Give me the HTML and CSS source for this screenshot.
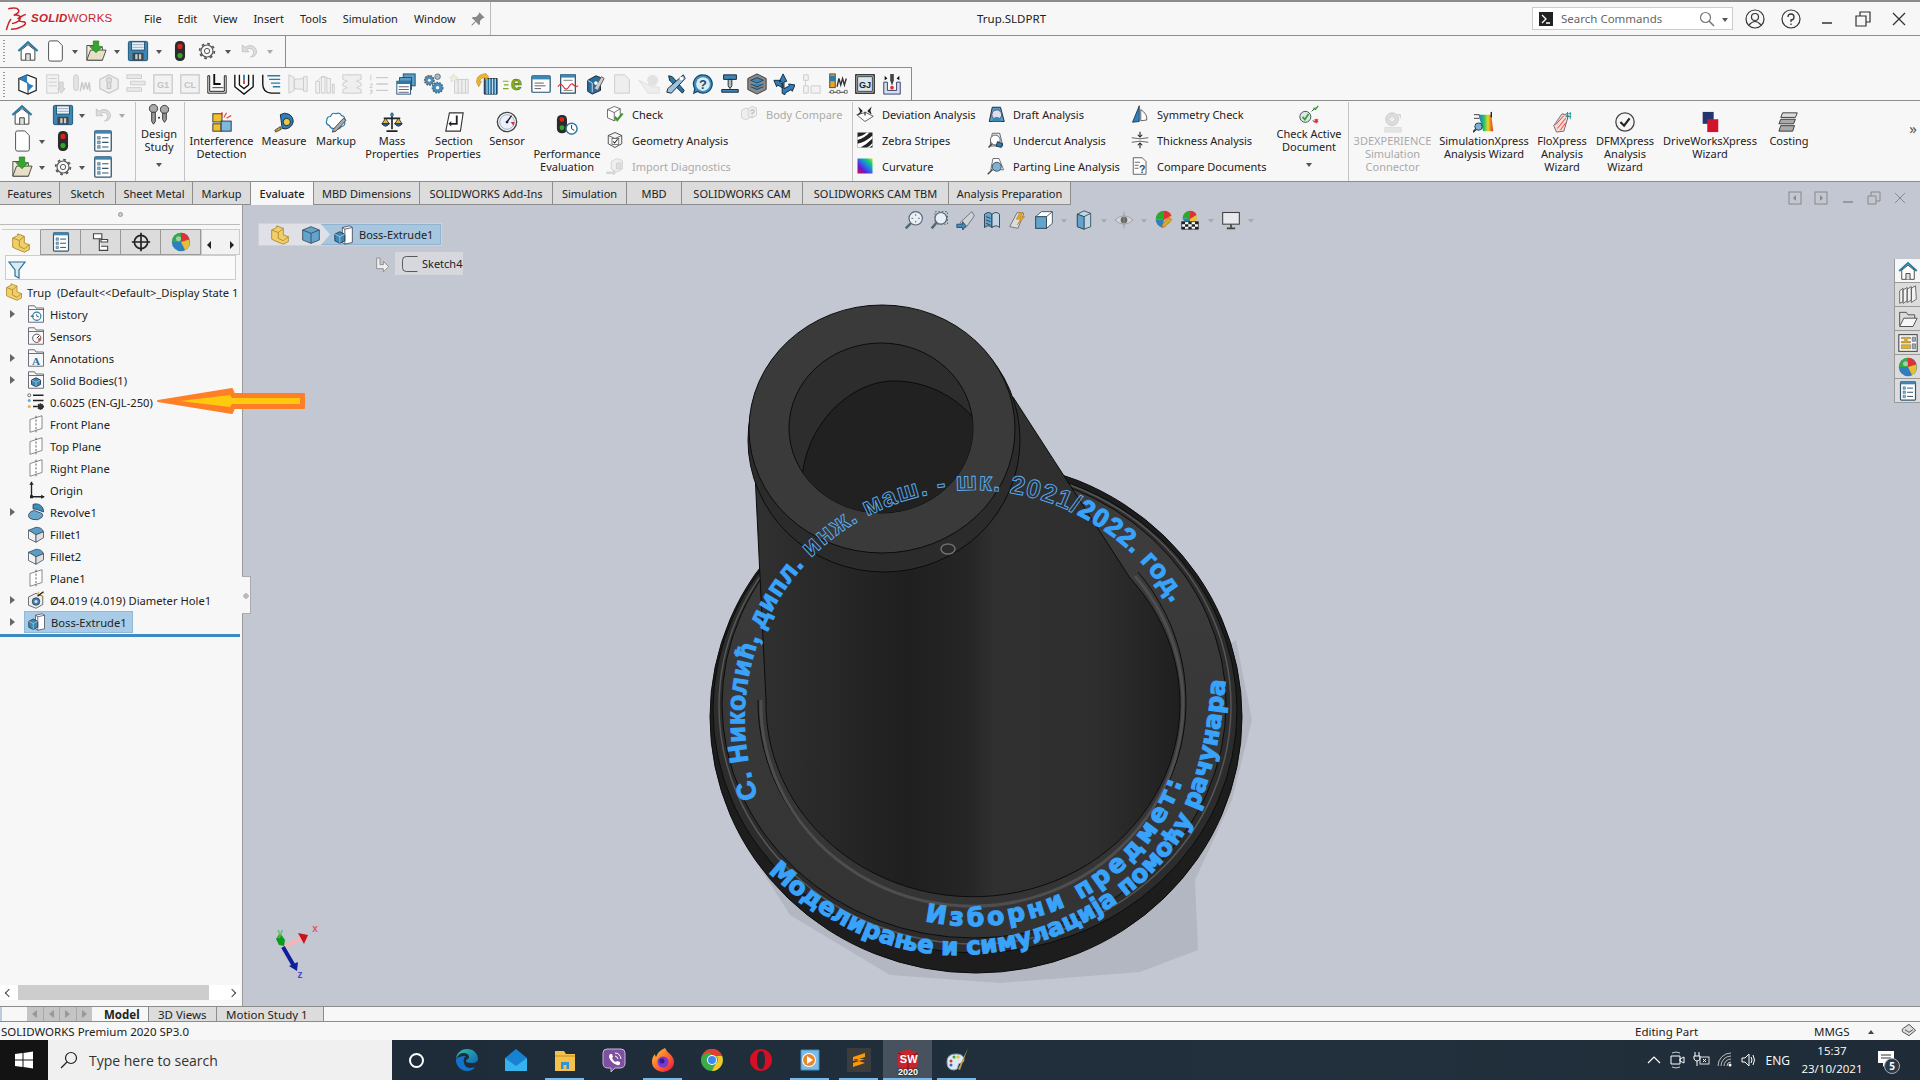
FILE: index.html
```html
<!DOCTYPE html>
<html lang="en">
<head>
  <meta charset="UTF-8">
  <title>Trup.SLDPRT</title>
  <link rel="stylesheet" href="styles.css">
</head>
<body>

<svg class="defs" aria-hidden="true">
  <!-- common -->
  <symbol id="home" viewBox="0 0 24 24"><path d="M1.5 12 12 2.5 22.500 12" fill="none" stroke="#2a7ca6" stroke-width="2.400"/><path d="M4.500 11v11h15V11L12 5z" fill="#fff" stroke="#333"/><path d="M9.500 22v-7h5v7" fill="#ddd" stroke="#333"/></symbol>
  <symbol id="doc" viewBox="0 0 24 24"><path d="M5 3q0-2 2-2h8l5 5v15q0 2-2 2H7q-2 0-2-2z" fill="#fff" stroke="#444"/></symbol>
  <symbol id="open" viewBox="0 0 24 24"><path d="M2 6h7l2 2h8v14H2z" fill="#f1eeda" stroke="#444"/><path d="M2 22l4-11h17l-4 11z" fill="#e6e0c4" stroke="#444"/><path d="M9 1h6v6h4l-7 7-7-7h4z" fill="#35a52b" stroke="#1c6b18" stroke-width=".600"/></symbol>
  <symbol id="save" viewBox="0 0 24 24"><rect x="1.500" y="1.500" width="21" height="21" rx="1.500" fill="#3d86b3" stroke="#1d4f70"/><rect x="5" y="2" width="14" height="9" fill="#eaf3f8" stroke="#1d4f70"/><path d="M6 5h12M6 8h12" stroke="#9ab"/><rect x="6" y="14" width="12" height="8" fill="#444"/><rect x="9" y="15.500" width="2.500" height="5.500" fill="#ccc"/><rect x="13" y="15.500" width="2.500" height="5.500" fill="#ccc"/></symbol>
  <symbol id="light" viewBox="0 0 24 24"><rect x="6.500" y="1" width="11" height="22" rx="5" fill="#2b2b2b"/><circle cx="12" cy="7" r="2.800" fill="#d9261c"/><circle cx="12" cy="17" r="2.800" fill="#2ea82a"/></symbol>
  <symbol id="gear" viewBox="0 0 24 24"><circle cx="12" cy="12" r="8" fill="none" stroke="#555" stroke-width="1.500"/><circle cx="12" cy="12" r="9.800" fill="none" stroke="#555" stroke-width="2.400" stroke-dasharray="3.500 4.200"/><circle cx="12" cy="12" r="3.500" fill="none" stroke="#555" stroke-width="1.300"/></symbol>
  <symbol id="undo" viewBox="0 0 24 24"><path d="M3 4v9h9L9 10c4-3 9-1 9 4 0 3-2 5-4 6 5 0 8-3 8-7 0-7-8-11-15-6z" fill="#ddd" stroke="#bbb"/></symbol>
  <symbol id="list" viewBox="0 0 24 24"><rect x="3" y="1" width="18" height="22" rx="1" fill="#fff" stroke="#33566e" stroke-width="1.400"/><rect x="3" y="1" width="18" height="3" fill="#3d86b3"/><path d="M6 7h3v3H6zM6 12h3v3H6zM6 17h3v3H6z" fill="#7fb2d0" stroke="#33566e" stroke-width=".500"/><path d="M11 8.500h7M11 13.500h7M11 18.500h7" stroke="#33566e" stroke-width="1.200"/></symbol>
  <symbol id="chk" viewBox="0 0 24 24"><path d="M2 6l9-4 8 3v11l-8 5-9-4z" fill="#fff" stroke="#444"/><path d="M2 6l9 4 8-5M11 10v11" fill="none" stroke="#444"/><path d="M11 17l4 5 8-10-2-1-6 7-2-3z" fill="#3c9a28" stroke="#25701a" stroke-width=".400"/></symbol>
  <symbol id="geo" viewBox="0 0 24 24"><path d="M3 6l9-4 9 4v11l-9 5-9-5z" fill="#f4f4f4" stroke="#444" stroke-width="1.200"/><path d="M3 6l9 4 9-4" fill="none" stroke="#444"/><rect x="8" y="10" width="9" height="8" fill="#fff" stroke="#555"/><path d="M9.500 14l2 2 4-5" fill="none" stroke="#222" stroke-width="1.400"/></symbol>
  <symbol id="gimp" viewBox="0 0 24 24"><path d="M7 6l8-4 7 3v11l-7 4-8-4z" fill="#eee" stroke="#ccc"/><path d="M14 8h6v8h-6z" fill="#ddd" stroke="#ccc"/><path d="M1 20h9v-2l3 3-3 3v-2H1z" fill="#ddd" stroke="#ccc"/></symbol>
  <symbol id="gbody" viewBox="0 0 24 24"><path d="M2 7l6-3 5 2v11l-5 3-6-3z" fill="#eee" stroke="#c8c8c8"/><path d="M11 5l5-3 6 2v10l-6 3-5-2z" fill="#eee" stroke="#c8c8c8"/><path d="M14 8q3-3 5 0 0 2-3 3v2M16 15v2" fill="none" stroke="#bbb" stroke-width="1.500"/></symbol>

  <!-- feature toolbar -->
  <symbol id="f1" viewBox="0 0 24 24"><path d="M2 6l9-4 10 4v13l-9 4-10-4z" fill="#fff" stroke="#222" stroke-width="1.300"/><path d="M2 6l10 5v12" fill="none" stroke="#222"/><path d="M2 6l9-4v9zM11 11l7 3-6 6z" fill="#2f7fc0"/></symbol>
  <symbol id="f2" viewBox="0 0 24 24"><path d="M3 2h13v20H3z" fill="#f2f2f2" stroke="#ccc"/><path d="M5 6h9M5 10h9M5 14h9" stroke="#ccc"/><path d="M17 10h4v7h2l-4 5-4-5h2z" fill="#ddd" stroke="#ccc"/></symbol>
  <symbol id="f3" viewBox="0 0 24 24"><rect x="3" y="2" width="5" height="17" rx="2.500" fill="#e4e4e4" stroke="#c9c9c9"/><path d="M10 20l2-10 2 8 2-8 2 8 2-8 1 10" fill="none" stroke="#c9c9c9" stroke-width="1.500"/></symbol>
  <symbol id="f4" viewBox="0 0 24 24"><path d="M12 2l10 5v10l-10 5-10-5V7z" fill="#eee" stroke="#ccc" stroke-width="1.500"/><circle cx="12" cy="8" r="3" fill="#ddd" stroke="#bbb"/><path d="M10 11v6h4v-6" fill="#ddd" stroke="#bbb"/></symbol>
  <symbol id="f5" viewBox="0 0 24 24"><path d="M2 2h16v4H2zM6 9h16v4H6zM2 16h16v4H2z" fill="#e9e9e9" stroke="#ccc"/></symbol>
  <symbol id="fbox" viewBox="0 0 24 24"><rect x="2" y="2" width="20" height="20" fill="#f2f2f2" stroke="#ccc" stroke-width="1.500"/></symbol>
  <symbol id="f8" viewBox="0 0 24 24"><path d="M2 3v19h20V3h-2v17H4V3z" fill="#fff" stroke="#111"/><path d="M9 1v11h7" fill="none" stroke="#111" stroke-width="2"/><path d="M7 16h12" stroke="#333"/></symbol>
  <symbol id="f9" viewBox="0 0 24 24"><path d="M2 2v13l10 8 10-8V2" fill="#fff" stroke="#111" stroke-width="1.500"/><path d="M7 2v11l5 4 5-4V2" fill="none" stroke="#111" stroke-width="1.500"/><path d="M11 2h2v6h-2z" fill="#2a7ca6"/><path d="M11 8h2v4h-2z" fill="#d33"/></symbol>
  <symbol id="f10" viewBox="0 0 24 24"><path d="M3 2v10q0 9 9 10h10" fill="none" stroke="#111" stroke-width="1.500"/><path d="M8 3h14M10 7h12M12 11h10M14 15h8" stroke="#2a7ca6" stroke-width="1.400"/></symbol>
  <symbol id="f11" viewBox="0 0 24 24"><path d="M2 2l6 3v14l-6 3zM22 4h-4v16h4zM8 7l10-1v12L8 17z" fill="#eee" stroke="#ccc"/></symbol>
  <symbol id="f12" viewBox="0 0 24 24"><path d="M2 22V9h4v13zM8 22V4h4v18zM14 22V6h4v16zM20 22V12h2v10z" fill="#f1f1f1" stroke="#ccc"/><path d="M4 9q4-8 12-3" fill="none" stroke="#ccc"/></symbol>
  <symbol id="f13" viewBox="0 0 24 24"><path d="M2 2h20v5l-5 2 5 2v3l-5 2 5 2v4H2v-4l5-2-5-2v-3l5-2-5-2z" fill="#eee" stroke="#ccc"/></symbol>
  <symbol id="f14" viewBox="0 0 24 24"><path d="M9 5h13M9 12h13M9 19h13" stroke="#ccc" stroke-width="1.500"/><path d="M3 2v6M2 12h3l-3 4h3M2 19h3l-2 2h2l-3 2" fill="none" stroke="#ccc"/></symbol>
  <symbol id="f15" viewBox="0 0 24 24"><rect x="9" y="1" width="13" height="13" fill="#5b9cc6" stroke="#1d4f70"/><rect x="5" y="5" width="13" height="13" fill="#5b9cc6" stroke="#1d4f70"/><rect x="2" y="9" width="15" height="14" fill="#fff" stroke="#1d4f70"/><rect x="2" y="9" width="15" height="3" fill="#2a7ca6"/><path d="M4 15h11M4 18h11M4 21h11" stroke="#557"/></symbol>
  <symbol id="f16" viewBox="0 0 24 24"><circle cx="8" cy="8" r="5" fill="#4b8fbd" stroke="#6a6a6a" stroke-width="2" stroke-dasharray="2 1"/><circle cx="17" cy="16" r="5.500" fill="#4b8fbd" stroke="#3a6f95" stroke-width="2" stroke-dasharray="2 1"/><circle cx="17" cy="4" r="3" fill="#9dc0d6" stroke="#6a6a6a"/><circle cx="8" cy="8" r="1.500" fill="#fff"/><circle cx="17" cy="16" r="1.800" fill="#fff"/></symbol>
  <symbol id="f17" viewBox="0 0 24 24"><path d="M6 7h15v15H6z" fill="#eee" stroke="#ccc"/><path d="M10 7v15M14 7v15M18 7v15" stroke="#ccc"/><path d="M5 1l1.500 3 3 .5-2 2 .5 3-3-1.500-3 1.500.5-3-2-2 3-.5z" fill="#f4f0c8" stroke="#ddd"/></symbol>
  <symbol id="f18" viewBox="0 0 24 24"><path d="M9 6h14v17H9z" fill="#246e9c" stroke="#123"/><path d="M12 6v17M15 6v17M18 6v17M21 6v17" stroke="#bfe0f2" stroke-width="1.200"/><path d="M1 8c0-4 4-7 9-7v-1l4 4-4 4V5c-3 0-5 1-6 4l2 0-3 6-3-6z" fill="#f0b429" stroke="#a06a10" stroke-width=".500"/></symbol>
  <symbol id="f19" viewBox="0 0 24 24"><path d="M0 9h6M1 13h5M0 17h6" stroke="#7cae1c" stroke-width="1.300"/></symbol>
  <symbol id="f20" viewBox="0 0 24 24"><rect x="2" y="3" width="20" height="18" rx="1" fill="#fff" stroke="#1d4f70" stroke-width="1.300"/><rect x="2" y="3" width="20" height="4" fill="#3d86b3"/><path d="M5 11h10M5 14h12M5 17h7" stroke="#555"/></symbol>
  <symbol id="f21" viewBox="0 0 24 24"><path d="M4 2h16v20H4z" fill="#fff" stroke="#1d4f70" stroke-width="1.300"/><rect x="4" y="2" width="16" height="3" fill="#3d86b3"/><path d="M7 8h10" stroke="#777"/><path d="M1 15q3-5 6 0t6 0 5-2 5 1" fill="none" stroke="#d33" stroke-width="1.300"/><path d="M7 19h10" stroke="#777"/></symbol>
  <symbol id="f22" viewBox="0 0 24 24"><path d="M4 8l9-5 5 2v14l-9 4-5-3z" fill="#296e9b" stroke="#123"/><path d="M4 8l5 3v10" fill="none" stroke="#cde"/><path d="M11 17l8-13 3 2-7 13z" fill="#ccc" stroke="#555"/><circle cx="13" cy="11" r="2" fill="#fff"/></symbol>
  <symbol id="f23" viewBox="0 0 24 24"><path d="M4 2h11l5 5v15H4z" fill="#eee" stroke="#ccc"/></symbol>
  <symbol id="f24" viewBox="0 0 24 24"><path d="M1 8l10 14h12V16q-4-2-7-1z" fill="#eee" stroke="#ddd"/><circle cx="16" cy="8" r="6" fill="#e2e2e2"/></symbol>
  <symbol id="f25" viewBox="0 0 24 24"><path d="M4 3l4 1 13 15-2 3L5 8z" fill="#2a76a5" stroke="#123"/><path d="M20 2l2 4-15 16-5-1 1-4z" fill="#9dc3da" stroke="#123"/><circle cx="18" cy="6" r="2" fill="#fff"/></symbol>
  <symbol id="f26" viewBox="0 0 24 24"><path d="M12 2a10 10 0 1 1-6 18l-4 2 1-5A10 10 0 0 1 12 2z" fill="#3d8dbd" stroke="#174a6c" stroke-width="1.400"/><circle cx="12" cy="12" r="7.500" fill="#dcecf5"/></symbol>
  <symbol id="f27" viewBox="0 0 24 24"><path d="M5 2h14v5H5z" fill="#3d86b3" stroke="#123"/><path d="M10 7h4v7l-2 3-2-3z" fill="#bbb" stroke="#123"/><path d="M3 18h18v3H3z" fill="#3d86b3" stroke="#123"/></symbol>
  <symbol id="f28" viewBox="0 0 24 24"><path d="M12 1l10 5v12l-10 5-10-5V6z" fill="#8a8a8a" stroke="#333"/><path d="M12 5l7 3-7 3-7-3zM5 12l7 3 7-3M5 15l7 3 7-3" fill="#3d86b3" stroke="#123" stroke-width=".700"/></symbol>
  <symbol id="f29" viewBox="0 0 24 24"><path d="M10 22V10L7 9l4-8 4 8-3 1v7l6-3-1-2 7 1-3 7-1-2-7 4v2z" fill="#2f7fc0" stroke="#123"/><path d="M10 16L5 13l-1 2-3-7 7 0-1 2 3 2z" fill="#2f7fc0" stroke="#123"/></symbol>
  <symbol id="f30" viewBox="0 0 24 24"><path d="M4 2h5v6H4zM12 14h10v8H12zM4 14h5v8H4zM6 8v6" fill="#f2f2f2" stroke="#ccc"/></symbol>
  <symbol id="f31" viewBox="0 0 24 24"><rect x="3" y="1" width="6" height="15" fill="#e5a624" stroke="#444"/><rect x="3" y="3" width="6" height="6" fill="#2a7ca6"/><path d="M11 15l2-9 2 7 2-7 2 7 2-7" fill="none" stroke="#333" stroke-width="1.500"/><path d="M2 21h20" stroke="#333"/><path d="M4 19h3v3H4zM11 19h3v3h-3zM19 19h3v3h-3z" fill="#fff" stroke="#333" stroke-width=".700"/></symbol>
  <symbol id="f32" viewBox="0 0 24 24"><rect x="2" y="2" width="20" height="20" fill="#fff" stroke="#111" stroke-width="1.400"/><rect x="4" y="4" width="16" height="16" fill="#d6e7f2" stroke="#333"/></symbol>
  <symbol id="f33" viewBox="0 0 24 24"><path d="M3 10v13h18V10h-4v9H7v-9z" fill="#cfe1ee" stroke="#336"/><path d="M10 1h4v7l-2 6-2-6z" fill="#444"/><circle cx="12" cy="16" r="2" fill="#d33"/><path d="M4 3l3 3-3 2zM20 3l-3 3 3 2z" fill="#111"/></symbol>

  <!-- ribbon buttons -->
  <symbol id="r-design" viewBox="0 0 24 24"><circle cx="6" cy="5" r="4.500" fill="#aaa" stroke="#333"/><circle cx="18" cy="6" r="4.500" fill="#aaa" stroke="#333"/><path d="M4 9h4v10l-2 3-2-3zM16 10h4v7l-2 3-2-3z" fill="#999" stroke="#333"/><path d="M11 15h2m-1-1v2" stroke="#111"/></symbol>
  <symbol id="r-interf" viewBox="0 0 24 24"><rect x="2" y="3" width="10" height="9" fill="#f0c030" stroke="#333"/><rect x="2" y="14" width="9" height="8" fill="#f0c030" stroke="#333"/><rect x="11" y="11" width="11" height="11" fill="#7fb8dc" stroke="#234"/><path d="M14 7l3-5M17 8l5-3M12 5V1" stroke="#e33" stroke-width="1.200"/></symbol>
  <symbol id="r-measure" viewBox="0 0 24 24"><path d="M8 4a9 9 0 0 1 14 8 9 9 0 0 1-12 7z" fill="#2f7fc0" stroke="#123"/><circle cx="15" cy="12" r="4" fill="#e8c84a" stroke="#123"/><path d="M8 17l-6 4 1 2 6-3z" fill="#c8a22a" stroke="#444"/></symbol>
  <symbol id="r-markup" viewBox="0 0 24 24"><path d="M6 6q2-5 6-3 4-2 6 2 5 1 3 6 2 5-3 6-3 4-7 2-5 1-6-3-5-2-3-6 0-4 4-4z" fill="#fff" stroke="#2a7ca6" stroke-width="1.300"/><path d="M9 20l11-12 3 2-11 12-4 1z" fill="#aaa" stroke="#444"/></symbol>
  <symbol id="r-mass" viewBox="0 0 24 24"><path d="M12 2v18M6 22h12M3 8h18" stroke="#222" stroke-width="1.800"/><path d="M1 14h8l-4-6zM15 14h8l-4-6z" fill="#e3b34a" stroke="#333"/><path d="M1 14q4 5 8 0zM15 14q4 5 8 0z" fill="#2a7ca6" stroke="#123"/><circle cx="12" cy="4" r="2" fill="#2a7ca6"/></symbol>
  <symbol id="r-section" viewBox="0 0 24 24"><path d="M7 2h15l-3 20H3z" fill="#fff" stroke="#333" stroke-width="1.200"/><path d="M14 5v8H9v-2l-3 3 3 3v-2h7V5z" fill="#222"/></symbol>
  <symbol id="r-sensor" viewBox="0 0 24 24"><circle cx="12" cy="12" r="10.500" fill="#fff" stroke="#444" stroke-width="1.500"/><circle cx="12" cy="12" r="8" fill="#eef" stroke="#8ab"/><path d="M19 16a8 8 0 0 0 1-4h-4z" fill="#d33"/><path d="M12 12l5-7" stroke="#222" stroke-width="1.500"/><circle cx="12" cy="12" r="1.500" fill="#222"/></symbol>
  <symbol id="r-perf" viewBox="0 0 24 24"><rect x="1" y="1" width="11" height="20" rx="5" fill="#2b2b2b"/><circle cx="6.500" cy="6" r="2.600" fill="#d9261c"/><circle cx="6.500" cy="15" r="2.600" fill="#2ea82a"/><circle cx="17" cy="16" r="6" fill="#fff" stroke="#2a7ca6" stroke-width="1.600"/><path d="M17 12v4l3 2" fill="none" stroke="#123"/></symbol>
  <symbol id="r-dev" viewBox="0 0 24 24"><path d="M3 2l6 6-3 3zM21 2l-6 6 3 3z" fill="#222"/><path d="M1 13l11 9 11-7-10-5z" fill="#fff" stroke="#333"/><path d="M3 13l4-4M12 9v5M18 7l2 5" stroke="#222" stroke-width="1.500"/></symbol>
  <symbol id="r-zebra" viewBox="0 0 24 24"><rect x="2" y="2" width="20" height="20" fill="#222"/><path d="M2 8Q10 6 14 2h4Q12 9 2 12zM2 17Q14 14 22 6v4Q14 18 6 22H2zM14 22q5-2 8-6v3l-4 3z" fill="#fff"/></symbol>
  <linearGradient id="rbw" x1="0" y1="1" x2="1" y2="0"><stop offset="0" stop-color="#e0004c"/><stop offset=".3" stop-color="#6a1bd0"/><stop offset=".55" stop-color="#1c80e8"/><stop offset=".8" stop-color="#18d070"/><stop offset="1" stop-color="#d8e020"/></linearGradient>
  <symbol id="r-curv" viewBox="0 0 24 24"><rect x="2" y="2" width="20" height="20" fill="url(#rbw)"/></symbol>
  <symbol id="r-draft" viewBox="0 0 24 24"><path d="M3 22L7 3h11l5 19z" fill="#5b9cc6" stroke="#123" stroke-width="1.200"/><circle cx="13" cy="13" r="6.500" fill="#dde" stroke="#345"/><path d="M7 22a6 6 0 0 1 12 0" fill="#3d86b3"/></symbol>
  <symbol id="r-under" viewBox="0 0 24 24"><path d="M7 3h10l4 17H4z" fill="#dfe6ea" stroke="#444"/><circle cx="11" cy="12" r="6.500" fill="#fff" stroke="#345"/><path d="M14 14l7 3-2 5-7-2z" fill="#2a7ca6" stroke="#123"/><path d="M2 22l5-5" stroke="#444" stroke-width="2"/></symbol>
  <symbol id="r-part" viewBox="0 0 24 24"><path d="M8 2h8l6 15H5z" fill="#fff" stroke="#444"/><circle cx="13" cy="13" r="6" fill="#7fb2d0" stroke="#234"/><path d="M1 23l6-6" stroke="#444" stroke-width="2"/></symbol>
  <symbol id="r-sym" viewBox="0 0 24 24"><path d="M11 1v21L2 23z" fill="#2f7fc0" stroke="#123"/><path d="M13 6v15l8-1q1-8-8-14z" fill="#fff" stroke="#333"/></symbol>
  <symbol id="r-thick" viewBox="0 0 24 24"><path d="M1 9l8 1q3 1 6 0l8-1M1 15l8-1q3-1 6 0l8 1" fill="none" stroke="#333"/><path d="M12 1v6m-3-2 3 3 3-3M12 23v-6m-3 2 3-3 3 3" fill="none" stroke="#222" stroke-width="1.400"/></symbol>
  <symbol id="r-comp" viewBox="0 0 24 24"><path d="M3 1h12l5 5v17H3z" fill="#fff" stroke="#333"/><path d="M5 7h7M5 11h5M5 15h5" stroke="#333"/></symbol>
  <symbol id="r-active" viewBox="0 0 24 24"><circle cx="8" cy="14" r="6" fill="#dfe6ea" stroke="#444"/><path d="M5 14l2.500 3 4-6" fill="none" stroke="#2ea82a" stroke-width="2"/><path d="M15 8l4-4M16 18l3 2" stroke="#333"/><path d="M17 4l2 2 3-4" fill="none" stroke="#2ea82a" stroke-width="1.500"/><path d="M20 16v5m-2-4 4 3m0-3-4 3" stroke="#d33" stroke-width="1.300"/></symbol>
  <symbol id="r-3dx" viewBox="0 0 24 24"><path d="M3 18h18v5H3z" fill="#e4e4e4" stroke="#ddd"/><circle cx="11" cy="9" r="7" fill="#ddd" stroke="#ccc"/><path d="M7 9l4-4 4 4-4 4zM16 4h4v4" fill="#eee" stroke="#ccc"/></symbol>
  <linearGradient id="rbw2" x1="0" y1="0" x2="1" y2="0"><stop offset="0" stop-color="#2a6ed0"/><stop offset=".35" stop-color="#18c070"/><stop offset=".65" stop-color="#e8d820"/><stop offset="1" stop-color="#e03020"/></linearGradient>
  <symbol id="r-simx" viewBox="0 0 24 24"><path d="M6 4h14l2 18H11z" fill="url(#rbw2)"/><path d="M1 4h6M1 8h6" stroke="#333"/><circle cx="6" cy="17" r="4" fill="#7fb2d0" stroke="#234"/><path d="M3 20l-3 3" stroke="#234" stroke-width="2"/><path d="M20 1v6" stroke="#222" stroke-width="1.500"/></symbol>
  <symbol id="r-flox" viewBox="0 0 24 24"><path d="M3 16L12 3l7 2-5 17-8 1z" fill="#f8d8d0" stroke="#666"/><path d="M5 15l9-10M7 19l9-11M10 21l6-8" stroke="#d24" stroke-width=".900"/><path d="M16 3h6M16 6h6M18 1v8M21 1v8" stroke="#1a9090"/></symbol>
  <symbol id="r-dfm" viewBox="0 0 24 24"><circle cx="12" cy="12" r="10" fill="#f5f5f5" stroke="#444" stroke-width="1.400"/><path d="M7 12l4 4 6-8" fill="none" stroke="#222" stroke-width="2.400"/></symbol>
  <symbol id="r-drive" viewBox="0 0 24 24"><rect x="4" y="1" width="12" height="13" fill="#24346e"/><rect x="9" y="9" width="12" height="14" fill="#d0142c"/></symbol>
  <symbol id="r-cost" viewBox="0 0 24 24"><path d="M5 2h16l-2 5H3z" fill="#ddd" stroke="#333"/><path d="M3 9h16l-2 5H1zM3 16h15l-2 6H1z" fill="#aaa" stroke="#333"/></symbol>

  <!-- feature tree -->
  <symbol id="t-part" viewBox="0 0 24 24"><path d="M8 1l8 3v8l6 2v6l-6 3-10-4-4-2V6l6-3z" fill="#f0cf6a" stroke="#a8832a"/><path d="M2 6l8 3 6-5M10 9v7l6 3 6-5" fill="none" stroke="#a8832a"/></symbol>
  <symbol id="t-fold" viewBox="0 0 24 24"><path d="M2 4V1h8l2 3h10v19H2z" fill="#f7f7f7" stroke="#445"/><path d="M2 6h20" stroke="#445"/></symbol>
  <symbol id="t-hist" viewBox="0 0 24 24"><use href="#t-fold"/><circle cx="13" cy="15" r="5.500" fill="#fff" stroke="#2a7ca6" stroke-width="1.500"/><path d="M13 12v3l3 1" fill="none" stroke="#234"/><path d="M5 15h4" stroke="#2a7ca6" stroke-width="2"/></symbol>
  <symbol id="t-sens" viewBox="0 0 24 24"><use href="#t-fold"/><circle cx="13" cy="15" r="5.500" fill="#fff" stroke="#444" stroke-width="1.200"/><path d="M13 15l3-3" stroke="#222" stroke-width="1.300"/><path d="M15 19a5 5 0 0 0 3-4h-3z" fill="#d33"/></symbol>
  <symbol id="t-sol" viewBox="0 0 24 24"><use href="#t-fold"/><path d="M12 9l6 3v6l-6 3-6-3v-6z" fill="#3d86b3" stroke="#123"/><path d="M6 12l6 3 6-3M12 15v6" fill="none" stroke="#cde" stroke-width=".800"/></symbol>
  <symbol id="t-mat" viewBox="0 0 24 24"><circle cx="3" cy="3" r="2" fill="#fff" stroke="#444"/><circle cx="3" cy="10" r="2" fill="#6aa5cc"/><circle cx="3" cy="18" r="2" fill="#e3b34a"/><path d="M8 3h14M8 10h14M8 18h6" stroke="#222" stroke-width="2"/><circle cx="18" cy="18" r="3.500" fill="#333" stroke="#222" stroke-width="2" stroke-dasharray="1.500 1"/></symbol>
  <symbol id="t-plane" viewBox="0 0 24 24"><path d="M4 6l16-5v17L4 23z" fill="#fff" stroke="#666"/><path d="M12 1v22" stroke="#333" stroke-dasharray="3 2"/></symbol>
  <symbol id="t-orig" viewBox="0 0 24 24"><path d="M6 1v20h17" fill="none" stroke="#222" stroke-width="1.800"/><path d="M3 5l3-4 3 4zM19 18l4 3-4 3z" fill="#222"/><rect x="4" y="19" width="4" height="4" fill="#222"/></symbol>
  <symbol id="t-rev" viewBox="0 0 24 24"><path d="M8 2a10 10 0 0 1 14 10l-8-3q-3-1-6-1z" fill="#3d8dbd" stroke="#234"/><path d="M2 18q0-7 8-8l10 4q2 2 0 5-5 5-12 3-5-1-6-4z" fill="#6aa5cc" stroke="#234"/></symbol>
  <symbol id="t-fil" viewBox="0 0 24 24"><path d="M2 7l10-4q8 0 10 6L12 13z" fill="#5b9cc6" stroke="#345"/><path d="M2 7l10 6v10L2 18z" fill="#f2f2f2" stroke="#345"/><path d="M12 13l10-4v8l-10 6z" fill="#e0e0e0" stroke="#345"/></symbol>
  <symbol id="t-hole" viewBox="0 0 24 24"><path d="M2 8l10-5 9 4v11l-9 5-10-4z" fill="#eee" stroke="#444"/><circle cx="12" cy="14" r="5" fill="#3d86b3" stroke="#234"/><circle cx="12" cy="14" r="2" fill="#dde"/><path d="M14 7l8-6" stroke="#222" stroke-width="2"/><path d="M20 6l2 2M15 1l1 2M22 3l1 0" stroke="#e5a624" stroke-width="1.500"/></symbol>
  <symbol id="t-ext" viewBox="0 0 24 24"><path d="M10 3l9-2 3 2v18l-9 2-3-2z" fill="#fff" stroke="#445"/><path d="M10 3l3 2v18M13 5l9-2" fill="none" stroke="#445"/><path d="M7 8l6 3v8l-6 3-6-3v-8z" fill="#3d86b3" stroke="#234"/><path d="M1 11l6 3 6-3M7 14v8" fill="none" stroke="#cde" stroke-width=".800"/></symbol>
  <symbol id="t-sk" viewBox="0 0 24 24"><path d="M22 2H7Q2 2 2 7v10q0 5 5 5h15" fill="none" stroke="#555" stroke-width="1.300"/></symbol>
  <symbol id="t-cube" viewBox="0 0 24 24"><path d="M12 2l10 4v12l-10 4-10-4V6z" fill="#62a4cc" stroke="#345"/><path d="M2 6l10 4 10-4M12 10v12" fill="none" stroke="#345"/></symbol>
  <symbol id="t-link" viewBox="0 0 24 24"><path d="M4 3h5v10h5V8l8 8-8 8v-5H4z" fill="#eee" stroke="#888" stroke-width="1.300"/></symbol>

  <!-- heads-up view bar -->
  <symbol id="h-zfit" viewBox="0 0 24 24"><circle cx="14" cy="10" r="8" fill="#e8f0f5" stroke="#567" stroke-width="1.400"/><path d="M8 16l-6 6" stroke="#567" stroke-width="3"/><path d="M14 5v2M14 13v2M9 10h2M17 10h2" stroke="#555"/></symbol>
  <symbol id="h-zarea" viewBox="0 0 24 24"><path d="M6 2h15v15H6z" fill="none" stroke="#555" stroke-dasharray="2 2"/><circle cx="13" cy="10" r="7" fill="#e8f0f5" stroke="#567" stroke-width="1.400"/><path d="M8 15l-6 7" stroke="#567" stroke-width="3"/></symbol>
  <symbol id="h-prev" viewBox="0 0 24 24"><path d="M5 15l14-13 3 5-10 14z" fill="#cfd3d6" stroke="#667"/><path d="M1 17h7v-3l4 5-4 5v-3H1z" fill="#3d8dbd" stroke="#246"/></symbol>
  <symbol id="h-sect" viewBox="0 0 24 24"><path d="M3 5q5-4 9 0v16q-4-4-9 0z" fill="#6aa5cc" stroke="#234"/><path d="M12 5q5-4 9 0v16q-4-4-9 0z" fill="#bdd5e4" stroke="#234"/><path d="M5 8l5 2M5 12l5 2M5 16l5 2" stroke="#234"/></symbol>
  <symbol id="h-inst" viewBox="0 0 24 24"><path d="M2 20L11 3l8 1-7 18z" fill="#ddd" stroke="#666"/><path d="M14 3l-4 8h5l-4 7 9-10h-5l3-5z" fill="#e5a624" stroke="#a06a10" stroke-width=".500"/></symbol>
  <symbol id="h-cube" viewBox="0 0 24 24"><path d="M2 8l7-6h13v14l-7 6H2z" fill="#fff" stroke="#345"/><path d="M2 8h13v14M15 8l7-6" fill="none" stroke="#345"/><path d="M2 8h13v14H2z" fill="#62a4cc" stroke="#345"/></symbol>
  <symbol id="h-disp" viewBox="0 0 24 24"><path d="M4 5l8-4 8 3v16l-8 3-8-3z" fill="#bcd6e6" stroke="#345"/><path d="M4 5l8 3 8-4M12 8v15" fill="none" stroke="#345"/><path d="M4 5l8 3v15l-8-3z" fill="#62a4cc" stroke="#345"/></symbol>
  <symbol id="h-eye" viewBox="0 0 24 24"><path d="M1 12q11-10 22 0-11 10-22 0z" fill="#d4d6db" stroke="#999"/><circle cx="12" cy="12" r="4" fill="#666"/><path d="M12 2v20" stroke="#999"/></symbol>
  <symbol id="h-color" viewBox="0 0 24 24"><path d="M12 1a10 10 0 0 1 9 6l-9 5z" fill="#d33"/><path d="M12 1A10 10 0 0 0 2 11l10 1z" fill="#2ea82a"/><path d="M2 11a10 10 0 0 0 8 10l2-9z" fill="#2f7fc0"/><path d="M12 12l9-5q2 6-3 10z" fill="#e5c030"/><path d="M10 17l8-8 3 3-8 8-4 1z" fill="#e5a624" stroke="#555" stroke-width=".600"/></symbol>
  <symbol id="h-scene" viewBox="0 0 24 24"><path d="M12 1a9 9 0 0 1 8 5l-8 5z" fill="#d33"/><path d="M12 1a9 9 0 0 0-9 9l9 1z" fill="#2ea82a"/><path d="M3 10q1 3 3 4h6v-3z" fill="#2f7fc0"/><path d="M12 11l8-5q1 4-1 8h-7z" fill="#e5c030"/><path d="M2 14h20v9H2z" fill="#fff" stroke="#333"/><path d="M2 14h4v3H2zM10 14h4v3h-4zM18 14h4v3h-4zM6 17h4v3H6zM14 17h4v3h-4zM2 20h4v3H2zM10 20h4v3h-4zM18 20h4v3h-4z" fill="#222"/></symbol>
  <symbol id="h-mon" viewBox="0 0 24 24"><rect x="2" y="3" width="20" height="14" fill="#e8eaee" stroke="#444" stroke-width="1.300"/><path d="M12 17v4M7 22h10" stroke="#444" stroke-width="2"/></symbol>

  <!-- task pane -->
  <symbol id="p-book" viewBox="0 0 24 24"><path d="M2 7l4-3v16l-4 2zM6 6l5-3v16l-5 3zM11 5l5-3v16l-5 3zM16 4l5-3 1 16-6 4z" fill="#f2f2f2" stroke="#555"/></symbol>
  <symbol id="p-fold" viewBox="0 0 24 24"><path d="M2 20V4h8l2 3h8v4" fill="none" stroke="#555" stroke-width="1.200"/><path d="M2 21l5-10h16l-5 10z" fill="#f7f7f7" stroke="#555" stroke-width="1.200"/></symbol>
  <symbol id="p-tile" viewBox="0 0 24 24"><rect x="1" y="2" width="22" height="20" fill="#fff" stroke="#444" stroke-width="1.300"/><path d="M4 5h11v2H11v3h4v2H4v-2h4V7H4zM4 14h11v5H4z" fill="#e5b020" stroke="#555" stroke-width=".500"/><path d="M17 5h4v5h-4zM17 13h4v6h-4z" fill="#9ab" stroke="#444" stroke-width=".600"/></symbol>
  <symbol id="p-ball" viewBox="0 0 24 24"><circle cx="12" cy="12" r="11" fill="#2f7fc0"/><path d="M12 1a11 11 0 0 1 10 8l-10 3z" fill="#d33"/><path d="M12 1A11 11 0 0 0 1 12l11 0z" fill="#3aa84a"/><path d="M12 12l10-3q2 8-5 13z" fill="#e5c030"/><circle cx="9" cy="8" r="3" fill="#fff" opacity=".5"/></symbol>

  <!-- taskbar -->
  <linearGradient id="edge1" x1="0" y1="0" x2="1" y2="1"><stop offset="0" stop-color="#2fc3a0"/><stop offset="1" stop-color="#1266b8"/></linearGradient>
  <symbol id="w-edge" viewBox="0 0 24 24"><path d="M12 1c7 0 11 5 11 10 0 3-3 4-6 4-4 0-6-1-6-2 0-2 3-1 3-4 0-2-2-4-6-4C4 5 1 10 1 12 1 5 6 1 12 1z" fill="url(#edge1)"/><path d="M1 12c0 6 5 11 11 11 3 0 6-1 8-4-5 2-10 1-11-4-1-3 0-6 2-7-6 0-10 2-10 4z" fill="#1173c9"/></symbol>
  <symbol id="w-mail" viewBox="0 0 24 24"><path d="M1 10l11-9 11 9v13H1z" fill="#1682d2"/><path d="M1 10l11 8 11-8v13H1z" fill="#36b2ee"/></symbol>
  <symbol id="w-fold" viewBox="0 0 24 24"><path d="M2 3h9l2 3h9v17H2z" fill="#f2c14e"/><path d="M2 7h20v2H2z" fill="#e0a82c"/><rect x="8" y="14" width="8" height="7" fill="#3293d8"/><rect x="10.500" y="17" width="3" height="4" fill="#f2c14e"/></symbol>
  <symbol id="w-viber" viewBox="0 0 24 24"><path d="M5 1h14q4 0 4 4v10q0 5-5 5h-5l-4 4v-4H6q-5 0-5-5V5q0-4 4-4z" fill="#7d51a0" stroke="#cdb6e0"/><path d="M8 6l2 0 1 3-1 1q1 3 4 4l1-1 3 1v2q-1 2-3 1-6-2-8-8 0-2 1-3z" fill="#fff"/><path d="M13 5q5 0 6 6M13 8q2 0 3 3" fill="none" stroke="#fff"/></symbol>
  <linearGradient id="ffx" x1="0" y1="0" x2="1" y2="1"><stop offset="0" stop-color="#ffcb2f"/><stop offset=".6" stop-color="#ff5a32"/><stop offset="1" stop-color="#d8144a"/></linearGradient>
  <symbol id="w-fire" viewBox="0 0 24 24"><path d="M14 0q2 4 5 6 4 4 4 8a11 10 0 0 1-22 0q0-5 3-8 0 2 1 3 2-6 9-9z" fill="url(#ffx)"/><circle cx="12" cy="14" r="5.500" fill="#6f3bd0"/><circle cx="11" cy="13" r="2.500" fill="#3a1a90"/></symbol>
  <symbol id="w-chrome" viewBox="0 0 24 24"><circle cx="12" cy="12" r="11" fill="#3cab4a"/><path d="M12 1a11 11 0 0 1 10 7H12a4 4 0 0 0-8 2L3 6a11 11 0 0 1 9-5z" fill="#e53e30"/><path d="M22 8a11 11 0 0 1-10 15l4-8a4 4 0 0 0 0-7z" fill="#f7c52a"/><circle cx="12" cy="12" r="5" fill="#fff"/><circle cx="12" cy="12" r="4" fill="#4285f4"/></symbol>
  <symbol id="w-opera" viewBox="0 0 24 24"><path d="M12 1a11 11 0 1 0 0 22 11 11 0 0 0 0-22zm0 2c3 0 4 4 4 9s-1 9-4 9-4-4-4-9 1-9 4-9z" fill="#d60f24" fill-rule="evenodd"/></symbol>
  <symbol id="w-wmp" viewBox="0 0 24 24"><path d="M3 2h18v20H3z" fill="#7cbce4" stroke="#3a8fc8"/><circle cx="11" cy="12" r="7" fill="#fff"/><circle cx="11" cy="12" r="6" fill="#e8862a"/><path d="M9 8l6 4-6 4z" fill="#fff"/></symbol>
  <symbol id="w-subl" viewBox="0 0 24 24"><rect x="0" y="0" width="24" height="24" rx="1" fill="#3c3c3c"/><path d="M6 9l12-4v4L6 13zM6 11l12 4v0L6 19v-4l12-4z" fill="#ff9800"/></symbol>
  <symbol id="w-sw" viewBox="0 0 24 24"><path d="M2 5l10-4 10 4v14l-10 4-10-4z" fill="#c8242c"/><path d="M2 5l10 4 10-4M12 9v14" fill="none" stroke="#7a1015"/></symbol>
  <symbol id="w-paint" viewBox="0 0 24 24"><path d="M2 14q0-8 9-8 8 0 8 6 0 2-3 3-3 0-3 3 0 4-4 4-7 0-7-8z" fill="#dce9f2" stroke="#8ab"/><circle cx="6" cy="13" r="1.500" fill="#d33"/><circle cx="9" cy="9" r="1.500" fill="#3a3"/><circle cx="13" cy="9" r="1.500" fill="#e5c030"/><circle cx="6" cy="17" r="1.500" fill="#36c"/><path d="M23 0l-8 22-2-1z" fill="#c59a4a"/></symbol>
</svg>

<div class="titlebar">
  <div class="brand">
    <svg class="ds-mark" viewBox="0 0 26 28"><path d="M3 3q9-2 11 1t-5 6q7-1 7 3t-9 6M1 26q2-8 5-12M13 14q3-3 9-5-6 2-7 5t5 3q4 2-2 5-5 3-12 3" fill="none" stroke="#c8242c" stroke-width="1.600"/></svg>
    <span class="ds-solid">SOLID</span><span class="ds-works">WORKS</span>
  </div>
  <nav class="menu">
    <span>File</span><span>Edit</span><span>View</span><span>Insert</span><span>Tools</span><span>Simulation</span><span>Window</span>
    <svg class="pin" viewBox="0 0 24 24"><path d="M14 2l8 8-3 1-4 4 0 5-2 1-4-5-6 6-1-1 6-6-5-4 1-2h5l4-4z" fill="#888"/></svg>
  </nav>
  <div class="doc-title">Trup.SLDPRT</div>
  <div class="search">
    <svg class="i16" viewBox="0 0 16 16"><rect x="1" y="1" width="14" height="14" fill="#222"/><path d="M4 4l4 4-4 4M8 12h4" fill="none" stroke="#fff" stroke-width="1.300"/></svg>
    <span class="search-text">Search Commands</span>
    <svg class="i16 search-mag" viewBox="0 0 16 16"><circle cx="6.500" cy="6.500" r="5" fill="none" stroke="#777" stroke-width="1.200"/><path d="M10 10l5 5" stroke="#777" stroke-width="1.600"/></svg>
    <i class="car"></i>
  </div>
  <div class="win-icons">
    <svg class="i20" viewBox="0 0 20 20"><circle cx="10" cy="10" r="9" fill="none" stroke="#333" stroke-width="1.200"/><circle cx="10" cy="8" r="3.500" fill="none" stroke="#333" stroke-width="1.200"/><path d="M4 16q6-7 12 0" fill="none" stroke="#333" stroke-width="1.200"/></svg>
    <svg class="i20" viewBox="0 0 20 20"><circle cx="10" cy="10" r="9" fill="none" stroke="#333" stroke-width="1.200"/><path d="M7 8q0-3 3-3t3 3-3 3v2M10 14.500v1.500" fill="none" stroke="#333" stroke-width="1.300"/></svg>
    <svg class="i20" viewBox="0 0 20 20"><path d="M5 14h10" stroke="#333" stroke-width="1.500"/></svg>
    <svg class="i20" viewBox="0 0 20 20"><path d="M3 7h10v10H3zM7 7V3h10v10h-4" fill="none" stroke="#333" stroke-width="1.200"/></svg>
    <svg class="i20" viewBox="0 0 20 20"><path d="M4 4l12 12M16 4L4 16" stroke="#333" stroke-width="1.300"/></svg>
  </div>
</div>

<div class="toolrow quick">
  <div class="toolgroup">
    <span class="grip"></span>
    <span class="cell w27"><svg class="i22"><use href="#home"/></svg></span>
    <span class="cell w27"><svg class="i22"><use href="#doc"/></svg></span>
    <span class="cell w14"><i class="car"></i></span>
    <span class="cell w28"><svg class="i22"><use href="#open"/></svg></span>
    <span class="cell w14"><i class="car"></i></span>
    <span class="cell w28"><svg class="i22"><use href="#save"/></svg></span>
    <span class="cell w14"><i class="car"></i></span>
    <span class="cell w28"><svg class="i22"><use href="#light"/></svg></span>
    <span class="cell w26"><svg class="i18"><use href="#gear"/></svg></span>
    <span class="cell w16"><i class="car"></i></span>
    <span class="cell w26"><svg class="i18"><use href="#undo"/></svg></span>
    <span class="cell w16"><i class="car pale"></i></span>
  </div>
</div>

<div class="toolrow features">
  <div class="toolgroup">
    <span class="grip"></span>
    <span class="cell w27"><svg class="i22"><use href="#f1"/></svg></span>
    <span class="cell w27"><svg class="i22"><use href="#f2"/></svg></span>
    <span class="cell w27"><svg class="i22"><use href="#f3"/></svg></span>
    <span class="cell w27"><svg class="i22"><use href="#f4"/></svg></span>
    <span class="cell w27"><svg class="i22"><use href="#f5"/></svg></span>
    <span class="cell w27"><svg class="i22" viewBox="0 0 24 24"><use href="#fbox"/><text x="12" y="16" class="svg-tag">G1</text></svg></span>
    <span class="cell w27"><svg class="i22" viewBox="0 0 24 24"><use href="#fbox"/><text x="12" y="16" class="svg-tag">CL</text></svg></span>
    <span class="cell w27"><svg class="i22"><use href="#f8"/></svg></span>
    <span class="cell w27"><svg class="i22"><use href="#f9"/></svg></span>
    <span class="cell w27"><svg class="i22"><use href="#f10"/></svg></span>
    <span class="cell w27"><svg class="i22"><use href="#f11"/></svg></span>
    <span class="cell w27"><svg class="i22"><use href="#f12"/></svg></span>
    <span class="cell w27"><svg class="i22"><use href="#f13"/></svg></span>
    <span class="cell w27"><svg class="i22"><use href="#f14"/></svg></span>
    <span class="cell w27"><svg class="i22"><use href="#f15"/></svg></span>
    <span class="cell w27"><svg class="i22"><use href="#f16"/></svg></span>
    <span class="cell w27"><svg class="i22"><use href="#f17"/></svg></span>
    <span class="cell w27"><svg class="i22"><use href="#f18"/></svg></span>
    <span class="cell w27"><svg class="i22" viewBox="0 0 24 24"><use href="#f19"/><text x="14.500" y="18" class="svg-e">e</text></svg></span>
    <span class="cell w27"><svg class="i22"><use href="#f20"/></svg></span>
    <span class="cell w27"><svg class="i22"><use href="#f21"/></svg></span>
    <span class="cell w27"><svg class="i22"><use href="#f22"/></svg></span>
    <span class="cell w27"><svg class="i22"><use href="#f23"/></svg></span>
    <span class="cell w27"><svg class="i22"><use href="#f24"/></svg></span>
    <span class="cell w27"><svg class="i22"><use href="#f25"/></svg></span>
    <span class="cell w27"><svg class="i22" viewBox="0 0 24 24"><use href="#f26"/><text x="12" y="17" class="svg-q">?</text></svg></span>
    <span class="cell w27"><svg class="i22"><use href="#f27"/></svg></span>
    <span class="cell w27"><svg class="i22"><use href="#f28"/></svg></span>
    <span class="cell w27"><svg class="i22"><use href="#f29"/></svg></span>
    <span class="cell w27"><svg class="i22"><use href="#f30"/></svg></span>
    <span class="cell w27"><svg class="i22"><use href="#f31"/></svg></span>
    <span class="cell w27"><svg class="i22" viewBox="0 0 24 24"><use href="#f32"/><text x="12" y="16" class="svg-tag dark">GJ</text></svg></span>
    <span class="cell w27"><svg class="i22"><use href="#f33"/></svg></span>
  </div>
</div>

<div class="ribbon">
  <div class="rib-small">
    <span class="cell"><svg class="i22"><use href="#home"/></svg></span><span class="cell"></span>
    <span class="cell"><svg class="i22"><use href="#save"/></svg></span><span class="cell"><i class="car"></i></span>
    <span class="cell"><svg class="i18"><use href="#undo"/></svg></span><span class="cell"><i class="car pale"></i></span>
    <span class="cell"><svg class="i22"><use href="#doc"/></svg></span><span class="cell"><i class="car"></i></span>
    <span class="cell"><svg class="i22"><use href="#light"/></svg></span><span class="cell"></span>
    <span class="cell"><svg class="i22"><use href="#list"/></svg></span><span class="cell"></span>
    <span class="cell"><svg class="i22"><use href="#open"/></svg></span><span class="cell"><i class="car"></i></span>
    <span class="cell"><svg class="i18"><use href="#gear"/></svg></span><span class="cell"><i class="car"></i></span>
    <span class="cell"><svg class="i22"><use href="#list"/></svg></span><span class="cell"></span>
  </div>
  <div class="rib-btn high w48 sep-l">
    <svg class="i22"><use href="#r-design"/></svg>
    <span>Design<br>Study</span>
    <i class="car"></i>
  </div>
  <div class="rib-btn w74 sep-l"><svg class="i22"><use href="#r-interf"/></svg><span>Interference<br>Detection</span></div>
  <div class="rib-btn w52"><svg class="i22"><use href="#r-measure"/></svg><span>Measure</span></div>
  <div class="rib-btn w52"><svg class="i22"><use href="#r-markup"/></svg><span>Markup</span></div>
  <div class="rib-btn w60"><svg class="i22"><use href="#r-mass"/></svg><span>Mass<br>Properties</span></div>
  <div class="rib-btn w64"><svg class="i22"><use href="#r-section"/></svg><span>Section<br>Properties</span></div>
  <div class="rib-btn w42"><svg class="i22"><use href="#r-sensor"/></svg><span>Sensor</span></div>
  <div class="rib-btn low w78"><svg class="i22"><use href="#r-perf"/></svg><span>Performance<br>Evaluation</span></div>

  <div class="rib-col w134">
    <div class="rib-row"><svg class="i18"><use href="#chk"/></svg><span>Check</span></div>
    <div class="rib-row"><svg class="i18"><use href="#geo"/></svg><span>Geometry Analysis</span></div>
    <div class="rib-row off"><svg class="i18"><use href="#gimp"/></svg><span>Import Diagnostics</span></div>
  </div>
  <div class="rib-col w112">
    <div class="rib-row off"><svg class="i18"><use href="#gbody"/></svg><span>Body Compare</span></div>
  </div>
  <div class="rib-col w130 sep-l pad5">
    <div class="rib-row"><svg class="i18"><use href="#r-dev"/></svg><span>Deviation Analysis</span></div>
    <div class="rib-row"><svg class="i18"><use href="#r-zebra"/></svg><span>Zebra Stripes</span></div>
    <div class="rib-row"><svg class="i18"><use href="#r-curv"/></svg><span>Curvature</span></div>
  </div>
  <div class="rib-col w144">
    <div class="rib-row"><svg class="i18"><use href="#r-draft"/></svg><span>Draft Analysis</span></div>
    <div class="rib-row"><svg class="i18"><use href="#r-under"/></svg><span>Undercut Analysis</span></div>
    <div class="rib-row"><svg class="i18"><use href="#r-part"/></svg><span>Parting Line Analysis</span></div>
  </div>
  <div class="rib-col w141">
    <div class="rib-row"><svg class="i18"><use href="#r-sym"/></svg><span>Symmetry Check</span></div>
    <div class="rib-row"><svg class="i18"><use href="#r-thick"/></svg><span>Thickness Analysis</span></div>
    <div class="rib-row"><svg class="i18" viewBox="0 0 24 24"><use href="#r-comp"/><text x="15" y="21" class="svg-q">?</text></svg><span>Compare Documents</span></div>
  </div>
  <div class="rib-btn high w74">
    <svg class="i22"><use href="#r-active"/></svg>
    <span>Check Active<br>Document</span>
    <i class="car"></i>
  </div>
  <div class="rib-btn w88 sep-l off after-gap"><svg class="i22"><use href="#r-3dx"/></svg><span>3DEXPERIENCE<br>Simulation<br>Connector</span></div>
  <div class="rib-btn w96"><svg class="i22"><use href="#r-simx"/></svg><span>SimulationXpress<br>Analysis Wizard</span></div>
  <div class="rib-btn w60"><svg class="i22"><use href="#r-flox"/></svg><span>FloXpress<br>Analysis<br>Wizard</span></div>
  <div class="rib-btn w66"><svg class="i22"><use href="#r-dfm"/></svg><span>DFMXpress<br>Analysis<br>Wizard</span></div>
  <div class="rib-btn w104"><svg class="i22"><use href="#r-drive"/></svg><span>DriveWorksXpress<br>Wizard</span></div>
  <div class="rib-btn w54"><svg class="i22"><use href="#r-cost"/></svg><span>Costing</span></div>
  <span class="rib-more">»</span>
</div>

<div class="tabs">
  <div class="tabs-in">
    <span>Features</span><span>Sketch</span><span>Sheet Metal</span><span>Markup</span><span class="on">Evaluate</span><span>MBD Dimensions</span><span>SOLIDWORKS Add-Ins</span><span>Simulation</span><span>MBD</span><span>SOLIDWORKS CAM</span><span>SOLIDWORKS CAM TBM</span><span>Analysis Preparation</span>
  </div>
  <div class="doc-ctrl">
    <svg class="i14" viewBox="0 0 14 14"><rect x="1" y="1" width="12" height="12" fill="none" stroke="#888"/><path d="M8 4v6L5 7z" fill="#888"/></svg>
    <svg class="i14" viewBox="0 0 14 14"><rect x="1" y="1" width="12" height="12" fill="none" stroke="#888"/><path d="M6 4v6l3-3z" fill="#888"/></svg>
    <svg class="i14" viewBox="0 0 14 14"><path d="M2 11h10" stroke="#888" stroke-width="1.500"/></svg>
    <svg class="i14" viewBox="0 0 14 14"><path d="M1 5h8v8H1zM4 5V1h9v9h-4" fill="none" stroke="#888"/></svg>
    <svg class="i14" viewBox="0 0 14 14"><path d="M2 2l10 10M12 2L2 12" stroke="#888"/></svg>
  </div>
</div>

<div class="main">
  <aside class="panel">
    <div class="panel-top"><i class="dot"></i></div>
    <div class="mgr-tabs">
      <span class="on"><svg class="i20"><use href="#t-part"/></svg></span>
      <span><svg class="i20"><use href="#list"/></svg></span>
      <span><svg class="i20" viewBox="0 0 24 24"><path d="M3 2h10v6H3zM10 8v14h10v-5H12M12 12h8v-3h-8z" fill="#fff" stroke="#444" stroke-width="1.300"/></svg></span>
      <span><svg class="i20" viewBox="0 0 24 24"><circle cx="12" cy="12" r="8" fill="none" stroke="#222" stroke-width="2"/><path d="M12 1v22M1 12h22" stroke="#222" stroke-width="2"/></svg></span>
      <span><svg class="i20"><use href="#p-ball"/></svg></span>
      <span class="mgr-more"><i class="tri-l"></i><i class="tri-r"></i></span>
    </div>
    <div class="filter">
      <svg class="i18" viewBox="0 0 18 18"><path d="M1 1h16l-6 8v8l-4-2V9z" fill="#dbe9f2" stroke="#2a6f97" stroke-width="1.200"/></svg>
    </div>
    <ul class="tree">
      <li class="root"><svg class="i18"><use href="#t-part"/></svg><span>Trup  (Default&lt;&lt;Default&gt;_Display State 1</span></li>
      <li><i class="exp"></i><svg class="i18"><use href="#t-hist"/></svg><span>History</span></li>
      <li><i class="noexp"></i><svg class="i18"><use href="#t-sens"/></svg><span>Sensors</span></li>
      <li><i class="exp"></i><svg class="i18" viewBox="0 0 24 24"><use href="#t-fold"/><text x="12" y="21" class="svg-a">A</text></svg><span>Annotations</span></li>
      <li><i class="exp"></i><svg class="i18"><use href="#t-sol"/></svg><span>Solid Bodies(1)</span></li>
      <li><i class="noexp"></i><svg class="i18"><use href="#t-mat"/></svg><span>0.6025 (EN-GJL-250)</span></li>
      <li><i class="noexp"></i><svg class="i18"><use href="#t-plane"/></svg><span>Front Plane</span></li>
      <li><i class="noexp"></i><svg class="i18"><use href="#t-plane"/></svg><span>Top Plane</span></li>
      <li><i class="noexp"></i><svg class="i18"><use href="#t-plane"/></svg><span>Right Plane</span></li>
      <li><i class="noexp"></i><svg class="i18"><use href="#t-orig"/></svg><span>Origin</span></li>
      <li><i class="exp"></i><svg class="i18"><use href="#t-rev"/></svg><span>Revolve1</span></li>
      <li><i class="noexp"></i><svg class="i18"><use href="#t-fil"/></svg><span>Fillet1</span></li>
      <li><i class="noexp"></i><svg class="i18"><use href="#t-fil"/></svg><span>Fillet2</span></li>
      <li><i class="noexp"></i><svg class="i18"><use href="#t-plane"/></svg><span>Plane1</span></li>
      <li><i class="exp"></i><svg class="i18"><use href="#t-hole"/></svg><span>Ø4.019 (4.019) Diameter Hole1</span></li>
      <li class="sel"><i class="exp"></i><div class="sel-box"><svg class="i18"><use href="#t-ext"/></svg><span>Boss-Extrude1</span></div></li>
    </ul>
    <div class="rollback"></div>
    <div class="hscroll"><i class="sc-l"></i><div class="thumb"></div><i class="sc-r"></i></div>
  </aside>

  <section class="viewport">
    <svg class="model" viewBox="243 205 1677 801">
      <defs>
        <linearGradient id="cone" gradientUnits="userSpaceOnUse" x1="760" y1="0" x2="1180" y2="0">
          <stop offset="0" stop-color="#303030"/><stop offset=".35" stop-color="#1f1f1f"/><stop offset=".5" stop-color="#262626"/><stop offset=".56" stop-color="#303030"/><stop offset=".8" stop-color="#2e2e2e"/><stop offset="1" stop-color="#1f1f1f"/>
        </linearGradient>
        <linearGradient id="face" x1="0" y1="0" x2="0" y2="1">
          <stop offset="0" stop-color="#3d3d3d"/><stop offset="1" stop-color="#333"/>
        </linearGradient>
        <clipPath id="holeclip"><ellipse cx="881" cy="428" rx="92" ry="85"/></clipPath>
        <path id="arc-top" d="M758,797 A226 226 0 0 1 1190,642"/>
        <path id="arc-out" d="M768,872 C820,920 885,955 955,955 C1045,955 1130,910 1180,840 C1215,790 1228,710 1229,600"/>
        <path id="arc-in" d="M925,921 A222 214 0 0 0 1190,755"/>
      </defs>

      <path class="shadow" d="M1236,640 L1252,720 L1232,800 L1195,880 L1198,950 L1140,972 L1000,983 L890,975 L790,915 L755,860 L1000,800z"/>

      <ellipse cx="976" cy="717" rx="266" ry="256" fill="#1d1d1d" stroke="#0c0c0c"/>
      <ellipse cx="975" cy="710" rx="262" ry="243" fill="#2c2c2c" stroke="#0c0c0c"/>
      <ellipse cx="975" cy="706" rx="256" ry="238" fill="none" stroke="#565656" stroke-width="1.500"/>
      <ellipse cx="974" cy="704" rx="252" ry="234" fill="url(#face)" stroke="#0c0c0c"/>

      <path d="M758,700 A214 205 0 1 0 1138,572" fill="none" stroke="#0c0c0c" stroke-width="1"/>
      <path d="M761,700 A211 202 0 1 0 1135,576" fill="none" stroke="#4e4e4e" stroke-width="3"/>
      <path class="cone" d="M755,473 L766,700 A207 193 0 1 0 1130,578 L1013,397 Z"/>

      <ellipse cx="884" cy="440" rx="136" ry="132" fill="#2b2b2b" stroke="#0c0c0c"/>
      <ellipse cx="882" cy="429" rx="133" ry="124" fill="#3a3a3a" stroke="#0c0c0c"/>
      <ellipse cx="881" cy="428" rx="92" ry="85" fill="#2d2d2d" stroke="#0c0c0c"/>
      <g clip-path="url(#holeclip)">
        <path d="M802,480 C805,425 850,381 894,381 C925,381 955,395 975,420 L990,530 L790,530Z" fill="#212121" stroke="#0c0c0c"/>
      </g>
      <ellipse cx="948" cy="549" rx="7" ry="5" fill="#2a2a2a" stroke="#6f6f6f" stroke-width="1.500"/>

      <text class="emboss top"><textPath href="#arc-top">С. Николић, дипл. <tspan class="hollow">инж. маш. - шк. 2021/</tspan>2022. год.</textPath></text>
      <text class="emboss wide"><textPath href="#arc-out">Моделирање и симулација помоћу рачунара</textPath></text>
      <text class="emboss wide big"><textPath href="#arc-in">Изборни предмет:</textPath></text>

      <!-- triad -->
      <path d="M284,947 L304,937" stroke="#f5b5b5" stroke-width="4"/>
      <path d="M298,933 L308,935 L304,944z" fill="#c8141c"/>
      <path d="M283,947 L294,966" stroke="#0d1f9c" stroke-width="4"/>
      <path d="M289,966 L298,962 L297,971z" fill="#0d1f9c"/>
      <path d="M279,945 L276,939 L280,933 L285,940 L284,946z" fill="#0a9a1c"/>
      <text x="315" y="932" class="axis ax-x">x</text>
      <text x="280" y="936" class="axis ax-y">y</text>
      <text x="300" y="978" class="axis ax-z">z</text>
    </svg>

    <div class="crumbs">
      <span class="crumb c1"><svg class="i20"><use href="#t-part"/></svg></span>
      <span class="crumb c2"><svg class="i20"><use href="#t-cube"/></svg></span>
      <span class="crumb c3"><svg class="i20"><use href="#t-ext"/></svg><span>Boss-Extrude1</span></span>
    </div>
    <div class="sub-crumb">
      <svg class="i16"><use href="#t-link"/></svg>
      <span class="sk"><svg class="i18"><use href="#t-sk"/></svg><span>Sketch4</span></span>
    </div>

    <div class="hud">
      <span class="cell w26"><svg class="i20"><use href="#h-zfit"/></svg></span>
      <span class="cell w26"><svg class="i20"><use href="#h-zarea"/></svg></span>
      <span class="cell w26"><svg class="i20"><use href="#h-prev"/></svg></span>
      <span class="cell w26"><svg class="i20"><use href="#h-sect"/></svg></span>
      <span class="cell w26"><svg class="i20"><use href="#h-inst"/></svg></span>
      <span class="cell w26"><svg class="i20"><use href="#h-cube"/></svg></span>
      <span class="cell w14"><i class="car pale"></i></span>
      <span class="cell w26"><svg class="i20"><use href="#h-disp"/></svg></span>
      <span class="cell w14"><i class="car pale"></i></span>
      <span class="cell w26"><svg class="i20"><use href="#h-eye"/></svg></span>
      <span class="cell w14"><i class="car pale"></i></span>
      <span class="cell w26"><svg class="i20"><use href="#h-color"/></svg></span>
      <span class="cell w26"><svg class="i20"><use href="#h-scene"/></svg></span>
      <span class="cell w15"><i class="car pale"></i></span>
      <span class="cell w26"><svg class="i20"><use href="#h-mon"/></svg></span>
      <span class="cell w14"><i class="car pale"></i></span>
    </div>

    <div class="taskpane">
      <span class="on"><svg class="i20"><use href="#home"/></svg></span>
      <span><svg class="i20"><use href="#p-book"/></svg></span>
      <span><svg class="i20"><use href="#p-fold"/></svg></span>
      <span><svg class="i20"><use href="#p-tile"/></svg></span>
      <span><svg class="i20"><use href="#p-ball"/></svg></span>
      <span><svg class="i20"><use href="#list"/></svg></span>
    </div>
  </section>

  <i class="panel-handle"></i>
  <svg class="callout" viewBox="0 0 150 28"><path d="M2 14 L76 2 L78 7 L148 7 L148 21 L78 21 L76 26z" fill="#ff7f27" stroke="#ff7f27" stroke-width="2" stroke-linejoin="round"/><path d="M24 14 L74 8 L76 11 L144 11 L144 17 L76 17 L74 20z" fill="#ffc90e"/></svg>
</div>

<div class="sheetbar">
  <div class="sheet-nav"><i class="nav-l"></i><i class="nav-l"></i><i class="nav-r"></i><i class="nav-r"></i></div>
  <span class="sheet on">Model</span><span class="sheet s2">3D Views</span><span class="sheet s3">Motion Study 1</span>
</div>

<footer class="status">
  <span class="status-l">SOLIDWORKS Premium 2020 SP3.0</span>
  <span class="status-e">Editing Part</span>
  <span class="status-u">MMGS</span>
  <i class="car up"></i>
  <svg class="i16 status-k" viewBox="0 0 24 24"><path d="M2 9l10-7 10 9-10 8-10-6z" fill="#ddd" stroke="#555" stroke-width="1.500"/><path d="M6 10l6 4 6-4" fill="none" stroke="#555" stroke-width="1.500"/></svg>
</footer>

<div class="taskbar">
  <div class="start"><svg class="i18" viewBox="0 0 18 18"><path d="M0 3l7.500-1v6.500H0zM8.500 2L18 .5v8h-9.500zM0 9.500h7.500V16L0 15zM8.500 9.500H18v8L8.500 16z" fill="#fff"/></svg></div>
  <div class="tb-search">
    <svg class="i18" viewBox="0 0 18 18"><circle cx="11" cy="7" r="5.500" fill="none" stroke="#222" stroke-width="1.200"/><path d="M7 11l-6 6" stroke="#222" stroke-width="1.300"/></svg>
    <span>Type here to search</span>
  </div>
  <div class="apps">
    <span class="app cort"><i class="ring"></i></span>
    <span class="app"><svg class="i24"><use href="#w-edge"/></svg></span>
    <span class="app"><svg class="i24"><use href="#w-mail"/></svg></span>
    <span class="app run"><svg class="i24"><use href="#w-fold"/></svg></span>
    <span class="app"><svg class="i24"><use href="#w-viber"/></svg></span>
    <span class="app run"><svg class="i24"><use href="#w-fire"/></svg></span>
    <span class="app"><svg class="i24"><use href="#w-chrome"/></svg></span>
    <span class="app"><svg class="i24"><use href="#w-opera"/></svg></span>
    <span class="app run"><svg class="i24"><use href="#w-wmp"/></svg></span>
    <span class="app run"><svg class="i24"><use href="#w-subl"/></svg></span>
    <span class="app run active"><svg class="i24" viewBox="0 0 24 24"><use href="#w-sw"/><text x="7.500" y="15" class="svg-sw">S</text><text x="16.500" y="15" class="svg-sw">W</text></svg><em>2020</em></span>
    <span class="app run"><svg class="i24"><use href="#w-paint"/></svg></span>
  </div>
  <div class="tray">
    <svg class="i16" viewBox="0 0 16 16"><path d="M2 11l6-6 6 6" fill="none" stroke="#fff" stroke-width="1.200"/></svg>
    <svg class="i18" viewBox="0 0 18 18"><path d="M3 5h9v8H3zM12 8l4-2v6l-4-2z" fill="none" stroke="#fff"/><path d="M4 2q4-2 8 0M4 16q4 2 8 0" fill="none" stroke="#ccc"/></svg>
    <svg class="i18" viewBox="0 0 18 18"><path d="M3 1v4M7 1v4M2 5h6v3q-1 2-3 2t-3-2zM5 10v5" fill="none" stroke="#fff"/><rect x="8" y="6" width="9" height="7" fill="none" stroke="#ddd"/><path d="M11 8l3 3m0-3l-3 3" stroke="#fff"/></svg>
    <svg class="i18" viewBox="0 0 18 18"><path d="M2 15a13 13 0 0 1 13-13M5 15a10 10 0 0 1 10-10M8 15a7 7 0 0 1 7-7M11 15a4 4 0 0 1 4-4" fill="none" stroke="#bbb"/><circle cx="14" cy="14" r="1.500" fill="#fff"/></svg>
    <svg class="i18" viewBox="0 0 18 18"><path d="M2 7h3l4-4v12l-4-4H2z" fill="none" stroke="#fff"/><path d="M11 6q2 3 0 6M13 4q3 5 0 10" fill="none" stroke="#fff"/></svg>
    <span class="lang">ENG</span>
    <span class="clock">15:37<br>23/10/2021</span>
    <span class="notif">
      <svg class="i20" viewBox="0 0 20 20"><path d="M1 1h16v12H9l-3 4v-4H1z" fill="#fff"/><path d="M4 5h10M4 8h10" stroke="#333"/></svg>
      <b>5</b>
    </span>
  </div>
</div>

</body>
</html>
```

FILE: styles.css
```css
* { box-sizing: border-box; }

html, body {
  margin: 0;
  padding: 0;
}

body {
  width: 1920px;
  height: 1080px;
  overflow: hidden;
  display: flex;
  flex-direction: column;
  background: #f7f7f7;
  color: #222;
  font-family: "Noto Sans", "Liberation Sans", sans-serif;
  font-size: 11px;
  line-height: 13px;
}

.defs { position: absolute; width: 0; height: 0; }

svg { display: block; flex: none; }
.i14 { width: 14px; height: 14px; }
.i16 { width: 16px; height: 16px; }
.i18 { width: 18px; height: 18px; }
.i20 { width: 20px; height: 20px; }
.i22 { width: 22px; height: 22px; }
.i24 { width: 24px; height: 24px; }

.svg-tag { font: bold 10px "Liberation Sans", sans-serif; fill: #c4c4c4; text-anchor: middle; }
.svg-tag.dark { fill: #222; }
.svg-e { font: bold 22px "Liberation Sans", sans-serif; fill: #8ab31c; text-anchor: middle; stroke: #3a5a10; stroke-width: .5px; }
.svg-q { font: bold 14px "Liberation Sans", sans-serif; fill: #1d4f70; text-anchor: middle; }
.svg-a { font: bold 15px "Liberation Serif", serif; fill: #2a6f97; text-anchor: middle; }
.svg-sw { font: bold 11px "Liberation Sans", sans-serif; fill: #fff; text-anchor: middle; }

.car {
  display: block;
  width: 0;
  height: 0;
  margin-top: 2px;
  border: 3px solid transparent;
  border-top: 4px solid #555;
  border-bottom: 0;
}
.car.pale { border-top-color: #aaa; }
.car.up { border-top: 0; border-bottom: 4px solid #444; }

.cell { display: flex; align-items: center; justify-content: center; height: 100%; }
.w14 { width: 14px; }
.w15 { width: 15px; }
.w16 { width: 16px; }
.w26 { width: 26px; }
.w27 { width: 27px; }
.w28 { width: 28px; }
.w42 { width: 42px; }
.w48 { width: 49px; padding-right: 2px; }
.w52 { width: 52px; }
.w54 { width: 54px; }
.w60 { width: 60px; }
.w64 { width: 64px; }
.w66 { width: 66px; }
.w74 { width: 74px; }
.w78 { width: 78px; }
.w88 { width: 88px; }
.w96 { width: 96px; }
.w104 { width: 104px; }
.w112 { width: 112px; }
.w130 { width: 135px; }
.w134 { width: 134px; }
.w141 { width: 141px; }
.w144 { width: 144px; }

/* title bar */
.titlebar {
  height: 36px;
  flex: none;
  display: flex;
  align-items: center;
  border-top: 2px solid #8c8c8c;
  border-bottom: 1px solid #8c8c8c;
  font-size: 11px;
}
.brand { width: 126px; display: flex; align-items: center; padding-left: 5px; font-family: "Liberation Sans", sans-serif; font-size: 11.500px; color: #c8242c; letter-spacing: .3px; }
.ds-mark { width: 25px; height: 26px; margin-right: 1px; }
.ds-solid { font-weight: bold; font-style: italic; }
.ds-works { font-weight: normal; }
.menu { width: 365px; height: 100%; display: flex; align-items: center; gap: 16px; padding-left: 18px; border-right: 1px solid #bbb; }
.pin { width: 16px; height: 16px; margin-left: -2px; }
.doc-title { width: 1041px; text-align: center; font-size: 11.500px; }
.search {
  width: 201px;
  height: 23px;
  display: flex;
  align-items: center;
  gap: 7px;
  padding: 0 4px 0 5px;
  background: #fff;
  border: 1px solid #ccc;
  color: #666;
  font-size: 11.500px;
}
.search-mag { margin-left: auto; }
.win-icons { flex: 1; display: flex; align-items: center; justify-content: space-between; padding: 0 11px 0 12px; }

/* toolbars */
.toolrow { flex: none; display: flex; }
.quick { height: 31px; }
.quick .cell { padding-bottom: 2px; }
.features { height: 34px; border-bottom: 1px solid #8c8c8c; }
.toolgroup { position: relative; display: flex; padding-left: 14px; border-right: 1px solid #8c8c8c; }
.quick .toolgroup { width: 286px; }
.features .toolgroup { width: 912px; border-top: 1px solid #8c8c8c; }
.grip {
  position: absolute;
  left: 3px;
  top: 4px;
  bottom: 3px;
  width: 2px;
  background: repeating-linear-gradient(#999 0 1px, transparent 1px 3px);
}

/* ribbon */
.ribbon { height: 81px; flex: none; display: flex; border-bottom: 1px solid #8c8c8c; padding-top: 1px; }
.rib-small {
  width: 135px;
  display: grid;
  grid-template-columns: 24px 16px 26px 12px 30px 8px;
  grid-template-rows: 26px 26px 26px;
  padding-left: 10px;
}
.rib-btn { display: flex; flex-direction: column; align-items: center; padding-top: 9px; text-align: center; flex: none; }
.rib-btn svg { margin-bottom: 1px; }
.rib-btn span { display: block; white-space: nowrap; }
.rib-btn.high { padding-top: 2px; }
.rib-btn.high .car { margin-top: 10px; }
.rib-btn.low { padding-top: 12px; }
.rib-btn.low span { margin-top: 10px; }
.sep-l { border-left: 1px solid #c4c4c4; }
.after-gap { margin-left: 2px; }
.off { color: #aaa; }
.rib-col { flex: none; display: flex; flex-direction: column; }
.pad5 { padding-left: 3px; }
.rib-row { height: 26px; display: flex; align-items: center; gap: 7px; white-space: nowrap; padding-bottom: 2px; }
.rib-row svg { margin-right: 1px; }
.rib-more { margin-left: auto; margin-right: 3px; font-size: 15px; color: #555; padding-top: 20px; }

/* command tabs */
.tabs {
  position: relative;
  height: 23px;
  flex: none;
  background: #c3c7d2;
}
.tabs-in {
  width: 1071px;
  height: 100%;
  display: grid;
  grid-template-columns: 60px 56px 77px 58px 63px 106px 133px 74px 55px 121px 146px 122px;
}
.tabs-in span {
  display: flex;
  align-items: center;
  justify-content: center;
  white-space: nowrap;
  background: #dcdcdc;
  border-right: 1px solid #8c8c8c;
  border-bottom: 1px solid #8c8c8c;
}
.tabs-in .on { background: #f7f7f7; border-bottom: 0; font-weight: 500; }
.doc-ctrl { position: absolute; right: 13px; top: 8px; width: 119px; height: 16px; display: flex; justify-content: space-between; align-items: center; }

/* main area */
.main { position: relative; height: 801px; flex: none; display: flex; }

.panel {
  width: 243px;
  flex: none;
  display: flex;
  flex-direction: column;
  background: #f7f7f7;
  border-right: 1px solid #9a9a9a;
  padding-right: 2px;
  font-size: 11.200px;
}
.panel-top { height: 20px; border-bottom: 1px solid #bbb; flex: none; display: flex; justify-content: center; align-items: center; }
.dot { width: 5px; height: 5px; border-radius: 50%; background: #ccc; border: 1px solid #999; }
.mgr-tabs {
  height: 26px;
  flex: none;
  display: grid;
  grid-template-columns: 39px 40px 40px 40px 40px 1fr;
  margin: 4px 0 0 2px;
}
.mgr-tabs span {
  display: flex;
  align-items: center;
  justify-content: center;
  background: #dcdcdc;
  border: 1px solid #999;
  border-left: 0;
}
.mgr-tabs .on { background: #f7f7f7; border-bottom: 0; border-top: 1px solid #ccc; }
.mgr-tabs .mgr-more { background: #f2f2f2; gap: 8px; align-items: flex-end; padding-bottom: 5px; border: 1px solid #ccc; justify-content: space-around; }
.tri-l, .tri-r { display: block; width: 0; height: 0; border: 4px solid transparent; }
.tri-l { border-right: 4px solid #222; border-left: 0; }
.tri-r { border-left: 4px solid #222; border-right: 0; }
.filter {
  height: 25px;
  margin: 0 4px 0 5px;
  flex: none;
  padding: 5px 0 0 2px;
  border: 1px solid #ccc;
  background: #fafafa;
}
.tree { list-style: none; margin: 1px 0 0; padding: 0; }
.tree li { height: 22px; display: flex; align-items: center; white-space: pre; }
.tree li span { margin-left: 5px; }
.tree .root { padding-left: 5px; }
.tree .root span { margin-left: 4px; }
.exp, .noexp { display: block; width: 27px; flex: none; }
.exp::before {
  content: "";
  display: block;
  width: 0;
  height: 0;
  margin-left: 10px;
  border: 4px solid transparent;
  border-left: 5px solid #666;
  border-right: 0;
}
.sel-box {
  display: flex;
  align-items: center;
  height: 22px;
  margin-left: -3px;
  padding: 0 5px 0 3px;
  background: #a9cbe6;
  border: 1px solid #8fb9da;
}
.rollback { height: 3px; margin-top: 1px; background: #3d8bc0; flex: none; }
.hscroll {
  margin-top: auto;
  margin-bottom: 6px;
  height: 15px;
  flex: none;
  display: flex;
  align-items: center;
  background: #fff;
  padding: 0 5px 0 6px;
}
.thumb { width: 191px; height: 15px; margin: 0 auto 0 6px; background: #cdcdcd; }
.sc-l, .sc-r { display: block; width: 6px; height: 6px; border-left: 1.500px solid #444; border-bottom: 1.500px solid #444; }
.sc-l { transform: rotate(45deg); }
.sc-r { transform: rotate(225deg); }

.panel-handle {
  position: absolute;
  left: 242px;
  top: 371px;
  width: 9px;
  height: 38px;
  background: #f7f7f7 radial-gradient(circle at 4px 19px, #bbb 0 2.500px, transparent 3px);
  border: 1px solid #aaa;
  border-left: 0;
}
.callout { position: absolute; left: 156px; top: 182px; width: 150px; height: 28px; }

/* graphics area */
.viewport { position: relative; flex: 1; background: #c3c7d2; }
.model { position: absolute; left: 0; top: 0; width: 1677px; height: 801px; }
.shadow { fill: #b3b7c2; }
.cone { fill: url(#cone); stroke: #0c0c0c; stroke-width: 1; }
.emboss {
  font: bold 24px "Liberation Sans", sans-serif;
  fill: #39a2fb;
  stroke: #39a2fb;
  stroke-width: 1.200px;
}
.emboss.top { font-size: 26px; letter-spacing: 1.100px; }
.emboss.wide { font-family: "DejaVu Sans", sans-serif; font-size: 24.500px; letter-spacing: 0; }
.emboss.big { font-size: 25px; letter-spacing: 3.500px; }
.hollow { fill: none; stroke: #5bb0f5; stroke-width: .9px; }
.axis { font: bold 10px "Liberation Sans", sans-serif; text-anchor: middle; }
.ax-x { fill: #e05a5a; }
.ax-y { fill: #52c46a; }
.ax-z { fill: #4a4ac8; }

.crumbs {
  position: absolute;
  left: 15px;
  top: 18px;
  height: 23px;
  width: 184px;
  display: flex;
  align-items: center;
  background: #dfe1e6;
  border: 1px solid #cfd2d8;
  font-size: 11px;
}
.crumb { display: flex; align-items: center; height: 100%; flex: none; }
.crumb.c1 { width: 41px; padding-left: 11px; }
.crumb.c2 { width: 21px; padding-left: 1px; }
.crumb.c3 { flex: 1; gap: 5px; padding-left: 12px; white-space: nowrap; background: #a9c6df; border: 1px solid #8fb4d2; clip-path: polygon(0 0, 100% 0, 100% 100%, 0 100%, 9px 50%); }
.sub-crumb { position: absolute; left: 131px; top: 47px; height: 23px; display: flex; align-items: center; gap: 5px; font-size: 11px; }
.sk { display: flex; align-items: center; width: 68px; height: 23px; padding-left: 6px; background: #d6d8de; gap: 3px; }
.sk span { white-space: nowrap; }

.hud { position: absolute; left: 658px; top: 5px; height: 20px; display: flex; }
.taskpane { position: absolute; right: 0; top: 54px; width: 26px; }
.taskpane span { display: flex; height: 24px; align-items: center; justify-content: center; background: #dcdcdc; border: 1px solid #999; border-right: 0; border-top: 0; }
.taskpane .on { background: #f7f7f7; }

/* bottom bars */
.sheetbar {
  height: 15px;
  flex: none;
  display: flex;
  align-items: stretch;
  padding-left: 27px;
  border-top: 1px solid #8c8c8c;
  font-size: 11.500px;
  box-shadow: inset 2px 0 0 #bcd;
}
.sheet-nav { width: 65px; display: flex; background: #a8a8a8; gap: 1px; }
.nav-l, .nav-r { flex: 1; background: #c4c4c4; display: flex; align-items: center; justify-content: center; }
.nav-l::before, .nav-r::before { content: ""; width: 0; height: 0; border: 4px solid transparent; }
.nav-l::before { border-right: 5px solid #989898; border-left: 0; }
.nav-r::before { border-left: 5px solid #989898; border-right: 0; }
.sheet { display: flex; align-items: center; background: #dcdcdc; border-right: 1px solid #8c8c8c; padding-left: 9px; }
.sheet.on { width: 57px; background: #f7f7f7; font-weight: bold; padding-left: 12px; }
.sheet.s2 { width: 68px; padding-left: 9px; }
.sheet.s3 { width: 107px; }

.status {
  height: 19px;
  flex: none;
  display: flex;
  align-items: center;
  padding-left: 1px;
  border-top: 1px solid #8c8c8c;
  font-size: 11.500px;
}
.status-l { width: 1634px; white-space: nowrap; }
.status-e { width: 179px; }
.status-u { width: 54px; }
.status-k { margin-left: 27px; }

/* windows taskbar */
.taskbar {
  height: 40px;
  flex: none;
  display: flex;
  align-items: center;
  background: linear-gradient(90deg, #1d2b38, #22303d 70%, #1f2c38);
  color: #fff;
  font-family: "Open Sans", "Noto Sans", sans-serif;
}
.start { width: 48px; height: 100%; display: flex; align-items: center; justify-content: center; background: #131313; }
.tb-search {
  width: 344px;
  height: 100%;
  display: flex;
  align-items: center;
  gap: 11px;
  padding-left: 12px;
  background: #f0f0f0;
  color: #333;
  font-size: 14px;
}
.apps { display: flex; height: 100%; }
.app { position: relative; width: 49px; display: flex; align-items: center; justify-content: center; }
.app.cort { width: 50px; padding-right: 2px; }
.app.run::after { content: ""; position: absolute; left: 5px; right: 5px; bottom: 0; height: 2px; background: #76b9ed; }
.app.active { background: #47525e; }
.app.active::after { left: 0; right: 0; }
.app em { position: absolute; left: 15px; bottom: 3px; font: bold 9px "Liberation Sans", sans-serif; color: #fff; text-shadow: 0 0 2px #000; }
.ring { display: block; width: 15px; height: 15px; border-radius: 50%; border: 2px solid #fff; }
.tray { margin-left: auto; display: flex; align-items: center; gap: 6px; padding-right: 23px; font-size: 12px; }
.lang { margin: 0 0 0 2px; }
.clock { width: 82px; margin-left: -5px; text-align: center; line-height: 18px; font-size: 11.500px; }
.notif { position: relative; display: block; margin-left: -2px; }
.notif b {
  position: absolute;
  left: 7px;
  top: 8px;
  width: 16px;
  height: 16px;
  border-radius: 50%;
  background: #2a3a48;
  border: 1px solid #aab;
  font-size: 10px;
  line-height: 14px;
  text-align: center;
}
```
